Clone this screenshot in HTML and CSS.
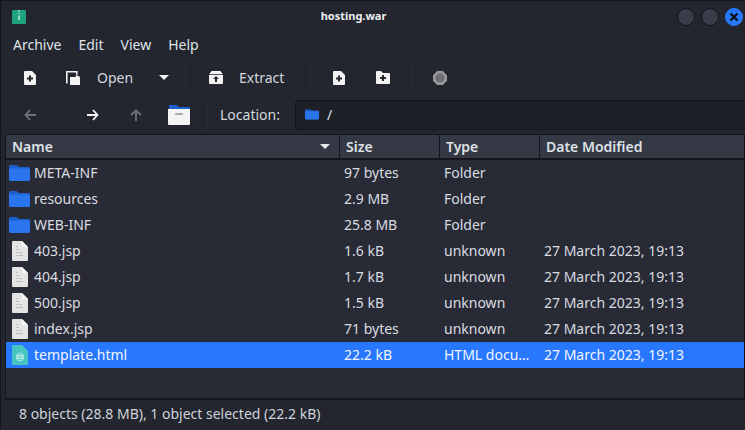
FILE: index.html
```html
<!DOCTYPE html>
<html lang="en">
<head>
<meta charset="utf-8">
<title>hosting.war</title>
<link rel="stylesheet" href="styles.css">
</head>
<body>
<svg class="defs" width="0" height="0">
  <defs>
    <symbol id="folder" viewBox="0 0 21 16">
      <path fill="#1d5fd0" d="M0 1.500A1.500 1.500 0 0 1 1.500 0h6l2.500 2h9.500A1.500 1.500 0 0 1 21 3.500V7H0z"/>
      <path fill="#2a74ee" d="M0 3.500h21V14.500a1.500 1.500 0 0 1-1.500 1.500h-18A1.500 1.500 0 0 1 0 14.500z"/>
    </symbol>
    <symbol id="doc" viewBox="0 0 16 20">
      <path fill="#e4e4e4" d="M1 0h9l6 6v13a1 1 0 0 1-1 1H1a1 1 0 0 1-1-1V1a1 1 0 0 1 1-1z"/>
      <path fill="#f6f6f6" d="M10 0l6 6h-6z"/>
      <path fill="#bdbdbd" d="M4 5h2v1H4zM4 8h3v1H4zM4 11h2v1H4zM7 11h3v1H7zM4 14h7v1H4z"/>
    </symbol>
    <symbol id="addfile" viewBox="0 0 12 14">
      <path fill="#f2f2f2" d="M1 0h7l4 4v9a1 1 0 0 1-1 1H1a1 1 0 0 1-1-1V1a1 1 0 0 1 1-1z"/>
      <path fill="#23262f" d="M5 4.500h2V6.500h2v2H7v2H5v-2H3v-2h2z"/>
    </symbol>
    <symbol id="addfolder" viewBox="0 0 14 13">
      <path fill="#f2f2f2" d="M0 1a1 1 0 0 1 1-1h4l2 2h6a1 1 0 0 1 1 1v9a1 1 0 0 1-1 1H1a1 1 0 0 1-1-1z"/>
      <path fill="#23262f" d="M6 4h2v2h2v2H8v2H6V8H4V6h2z"/>
    </symbol>
  </defs>
</svg>
<div class="window">
  <header class="titlebar">
    <svg class="appicon" viewBox="0 0 14 14" width="14" height="14">
      <rect width="14" height="14" rx="1.500" fill="#1fa37f"/>
      <path fill="#8fd8c2" d="M6 0h2v1.500H6zM6 3h2v1H6zM6 5.500h2V10H6z"/>
    </svg>
    <h1 class="title">hosting.war</h1>
    <div class="controls">
      <span class="ctl"></span>
      <span class="ctl"></span>
      <span class="ctl close">
        <svg viewBox="0 0 10 10" width="10" height="10"><path d="M1.500 1.500l7 7M8.500 1.500l-7 7" stroke="#0b0d12" stroke-width="2.200" fill="none"/></svg>
      </span>
    </div>
  </header>

  <nav class="menubar">
    <span class="menu">Archive</span>
    <span class="menu">Edit</span>
    <span class="menu">View</span>
    <span class="menu">Help</span>
  </nav>

  <div class="toolbar">
    <span class="tool t-new"><svg width="12" height="14"><use href="#addfile"/></svg></span>
    <span class="tool t-open">
      <svg viewBox="0 0 14 14" width="14" height="14"><path fill="none" stroke="#f2f2f2" stroke-width="1.600" d="M.8 12.500V.8h10v3"/><path fill="#f2f2f2" d="M4 6h5.500l1-2 3.500 2v8H4z"/></svg>
      <span class="tool-label">Open</span>
      <svg class="caret" viewBox="0 0 10 5" width="10" height="5"><path fill="#f2f2f2" d="M0 0h10L5 5z"/></svg>
    </span>
    <span class="sep"></span>
    <span class="tool t-extract">
      <svg viewBox="0 0 14 13" width="14" height="13"><path fill="#f2f2f2" d="M2.500 0h9L14 3.500V12a1 1 0 0 1-1 1H1a1 1 0 0 1-1-1V3.500z"/><path fill="#23262f" d="M0 3.300h14v.8H0zM7 5l3 3H8v3H6V8H4z"/></svg>
      <span class="tool-label">Extract</span>
    </span>
    <span class="sep"></span>
    <span class="tool t-addfile"><svg width="12" height="14"><use href="#addfile"/></svg></span>
    <span class="tool t-addfolder"><svg width="14" height="13"><use href="#addfolder"/></svg></span>
    <span class="sep"></span>
    <span class="tool t-stop">
      <svg viewBox="0 0 14 14" width="14" height="14"><path fill="#9a9a9a" d="M4.200 0h5.600L14 4.200v5.600L9.800 14H4.200L0 9.800V4.200z"/><circle cx="7" cy="7" r="4.700" fill="#6f7075"/></svg>
    </span>
  </div>

  <div class="locationbar">
    <span class="nav n-back"><svg viewBox="0 0 12 12" width="12" height="12"><path d="M6 1L1.500 6 6 11M1.500 6H12" fill="none" stroke="#6f7176" stroke-width="1.800"/></svg></span>
    <span class="nav n-fwd"><svg viewBox="0 0 12 12" width="12" height="12"><path d="M6 1l4.500 5L6 11M10.500 6H0" fill="none" stroke="#f4f4f4" stroke-width="1.800"/></svg></span>
    <span class="nav n-up"><svg viewBox="0 0 12 12" width="12" height="12"><path d="M1 6l5-4.500L11 6M6 1.500V12" fill="none" stroke="#6f7176" stroke-width="1.800"/></svg></span>
    <span class="nav n-home">
      <svg viewBox="0 0 22 20" width="22" height="20">
        <path fill="#1d5fd0" d="M1 1a1 1 0 0 1 1-1h7l2 2h10a1 1 0 0 1 1 1v3H1z"/>
        <path fill="#f4f4f4" d="M0 4h22v15a1 1 0 0 1-1 1H1a1 1 0 0 1-1-1z"/>
        <rect x="7" y="8" width="8" height="2" rx="1" fill="#a9a9a9"/>
      </svg>
    </span>
    <span class="sep"></span>
    <span class="loc-label">Location:</span>
    <div class="entry">
      <svg width="14" height="11" viewBox="0 0 21 16"><use href="#folder"/></svg>
      <span class="entry-text">/</span>
    </div>
  </div>

  <section class="list">
    <div class="row head">
      <span class="cell c-name">Name<svg class="sort" viewBox="0 0 10 5" width="10" height="5"><path fill="#e8e8e8" d="M0 0h10L5 5z"/></svg></span>
      <span class="cell c-size">Size</span>
      <span class="cell c-type">Type</span>
      <span class="cell c-date">Date Modified</span>
    </div>
    <div class="row">
      <span class="cell c-name"><svg class="ficon" width="21" height="16"><use href="#folder"/></svg>META-INF</span>
      <span class="cell c-size">97 bytes</span><span class="cell c-type">Folder</span><span class="cell c-date"></span>
    </div>
    <div class="row">
      <span class="cell c-name"><svg class="ficon" width="21" height="16"><use href="#folder"/></svg>resources</span>
      <span class="cell c-size">2.9 MB</span><span class="cell c-type">Folder</span><span class="cell c-date"></span>
    </div>
    <div class="row">
      <span class="cell c-name"><svg class="ficon" width="21" height="16"><use href="#folder"/></svg>WEB-INF</span>
      <span class="cell c-size">25.8 MB</span><span class="cell c-type">Folder</span><span class="cell c-date"></span>
    </div>
    <div class="row">
      <span class="cell c-name"><svg class="dicon" width="16" height="20"><use href="#doc"/></svg>403.jsp</span>
      <span class="cell c-size">1.6 kB</span><span class="cell c-type">unknown</span><span class="cell c-date">27 March 2023, 19:13</span>
    </div>
    <div class="row">
      <span class="cell c-name"><svg class="dicon" width="16" height="20"><use href="#doc"/></svg>404.jsp</span>
      <span class="cell c-size">1.7 kB</span><span class="cell c-type">unknown</span><span class="cell c-date">27 March 2023, 19:13</span>
    </div>
    <div class="row">
      <span class="cell c-name"><svg class="dicon" width="16" height="20"><use href="#doc"/></svg>500.jsp</span>
      <span class="cell c-size">1.5 kB</span><span class="cell c-type">unknown</span><span class="cell c-date">27 March 2023, 19:13</span>
    </div>
    <div class="row">
      <span class="cell c-name"><svg class="dicon" width="16" height="20"><use href="#doc"/></svg>index.jsp</span>
      <span class="cell c-size">71 bytes</span><span class="cell c-type">unknown</span><span class="cell c-date">27 March 2023, 19:13</span>
    </div>
    <div class="row selected">
      <span class="cell c-name">
        <svg class="dicon" viewBox="0 0 16 20" width="16" height="20">
          <path fill="#45c4c0" d="M1 0h9l6 6v13a1 1 0 0 1-1 1H1a1 1 0 0 1-1-1V1a1 1 0 0 1 1-1z"/>
          <circle cx="8" cy="12" r="4" fill="#cdf1ee"/>
          <path d="M4 12h8M8 8v8M5 9.500h6M5 14.500h6" stroke="#45c4c0" stroke-width=".7"/>
        </svg>template.html</span>
      <span class="cell c-size">22.2 kB</span><span class="cell c-type">HTML docu…</span><span class="cell c-date">27 March 2023, 19:13</span>
    </div>
  </section>

  <footer class="statusbar">8 objects (28.8 MB), 1 object selected (22.2 kB)</footer>
</div>
</body>
</html>
```

FILE: styles.css
```css
* { box-sizing: border-box; }
html, body { margin: 0; height: 100%; }
body {
  background: #23262f;
  color: #e2e4e8;
  font-family: "Noto Sans", sans-serif;
  font-size: 14px;
  overflow: hidden;
}
.defs { display: block; height: 0; }
.window {
  width: 745px;
  height: 430px;
  display: flex;
  flex-direction: column;
  border-top: 1px solid #14161b;
  border-left: 1px solid #14161b;
}

.titlebar {
  height: 31px;
  flex: none;
  position: relative;
  display: flex;
  align-items: center;
  padding: 0 2px 0 11px;
}
.appicon { flex: none; margin-top: 1px; }
.title {
  position: absolute;
  left: 0;
  right: 0;
  top: 6px;
  margin: 0;
  text-align: center;
  font-size: 11px;
  line-height: 18px;
  font-weight: 700;
  color: #eceef0;
  padding-right: 39px;
}
.controls { margin-left: auto; display: flex; gap: 6px; margin-top: 1px; }
.ctl {
  width: 18px;
  height: 18px;
  border-radius: 50%;
  background: #393c49;
  border: 1px solid #101217;
  display: flex;
  align-items: center;
  justify-content: center;
}
.close { background: #2777ff; border-color: #2777ff; }

.menubar {
  height: 26px;
  flex: none;
  display: flex;
  padding-left: 12px;
  gap: 17px;
  align-items: center;
  line-height: 26px;
  border-bottom: 1px solid #1f2229;
}
.menu { color: #dfe3e8; }

.toolbar {
  height: 39px;
  flex: none;
  display: flex;
  align-items: center;
}
.tool { display: flex; align-items: center; flex: none; }
.tool-label { color: #d5d8dd; }
.t-new { margin-left: 23px; width: 42px; }
.t-open { width: 119px; }
.t-open .tool-label { margin-left: 17px; }
.t-open .caret { margin-left: 26px; }
.sep { width: 1px; height: 30px; background: #2a2d37; flex: none; }
.t-extract { margin-left: 23px; width: 101px; }
.t-extract .tool-label { margin-left: 16px; }
.t-addfile { margin-left: 22px; width: 43px; }
.t-addfolder { width: 35px; }
.t-stop { margin-left: 21px; }

.locationbar {
  height: 37px;
  flex: none;
  display: flex;
  align-items: center;
  padding-bottom: 2px;
}
.nav { display: flex; align-items: center; flex: none; }
.n-back { margin-left: 23px; width: 63px; }
.n-fwd { width: 43px; }
.n-up { width: 38px; }
.n-home { width: 39px; }
.loc-label { margin-left: 12px; width: 75px; color: #d5d8dd; }
.entry {
  flex: 1;
  height: 30px;
  background: #1e2027;
  border: 1px solid #14161b;
  border-right: 0;
  border-radius: 4px 0 0 4px;
  display: flex;
  align-items: center;
  padding-left: 9px;
  gap: 8px;
}
.entry-text { color: #dfe3e8; }

.list {
  flex: none;
  height: 266px;
  margin-left: 4px;
  background: #282a35;
  border: 1px solid #14161b;
  border-bottom-width: 2px;
  overflow: hidden;
}
.row {
  display: flex;
  height: 26px;
  align-items: center;
  line-height: 26px;
}
.cell { flex: none; white-space: nowrap; display: flex; align-items: center; height: 100%; color: #d9dce1; }
.c-name { width: 333px; padding-left: 3px; }
.c-size { width: 100px; padding-left: 5px; }
.c-type { width: 100px; padding-left: 5px; }
.c-date { flex: 1; padding-left: 5px; }
.ficon { margin-right: 4px; flex: none; }
.dicon { margin: 0 6px 0 3px; flex: none; }

.head {
  height: 25px;
  background: #353945;
  border-bottom: 2px solid #14161b;
  line-height: 23px;
}
.head .cell { border-left: 1px solid #14161b; color: #dde0e5; font-weight: 600; position: relative; }
.head .c-name { border-left: 0; padding-left: 6px; }
.head .c-size, .head .c-type, .head .c-date { padding-left: 6px; }
.sort { position: absolute; left: 314px; top: 9px; }

.selected { background: #2777ff; }
.selected .cell { color: #f2f5ff; }

.statusbar {
  flex: 1;
  padding-left: 18px;
  display: flex;
  align-items: center;
  color: #cfd2d8;
  padding-bottom: 4px;
}
```
